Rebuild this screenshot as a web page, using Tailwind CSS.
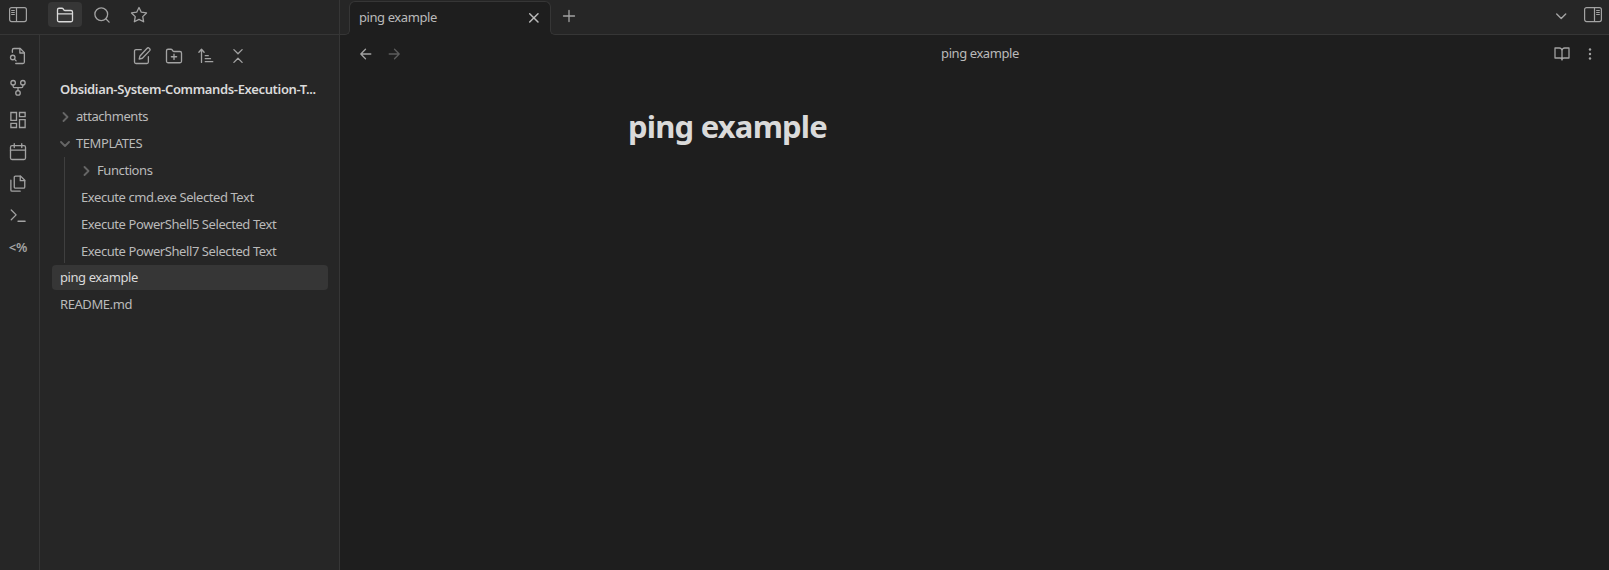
<!DOCTYPE html>
<html lang="en">
<head>
<meta charset="utf-8">
<title>ping example</title>
<script src="https://cdn.jsdelivr.net/npm/@tailwindcss/browser@4"></script>
</head>
<body class="flex h-[570px] w-[1609px] overflow-hidden bg-[#1e1e1e] font-['Noto_Sans','Open_Sans',sans-serif] text-[13px] leading-[17px] tracking-[-0.42px] text-[#bababa]">
<div class="flex w-[340px] shrink-0 flex-col border-r border-[#363636] bg-[#262626]">
  <header class="flex h-[35px] shrink-0 items-start border-b border-[#363636] text-[#a3a3a3]">
    <div class="flex h-[30px] w-12 items-center pl-[9px]">
      <svg class="h-[18px] w-[18px]" viewBox="0 0 18 18" fill="none" stroke="currentColor"><rect x=".6" y="1.6" width="16.8" height="14" rx="2" stroke-width="1.2"/><path d="M7.5 1.6v14" stroke-width="1.2"/><path d="M2.2 4.5h3.6M2.2 6.5h3.6M2.2 8.5h3.6"/></svg>
    </div>
    <div class="mt-[2px] flex h-[25px] w-[34px] items-center justify-center rounded-[4px] bg-[#363636] text-[#dadada]">
      <svg class="h-[18px] w-[18px]" viewBox="0 0 24 24" fill="none" stroke="currentColor" stroke-width="1.75" stroke-linecap="round" stroke-linejoin="round"><path d="M4 21h16a2 2 0 0 0 2-2V8a2 2 0 0 0-2-2h-7.93a2 2 0 0 1-1.66-.9l-.82-1.2A2 2 0 0 0 7.930 3H4a2 2 0 0 0-2 2v14c0 1.100.9 2 2 2ZM2 10.500h20"/></svg>
    </div>
    <div class="mt-[2px] ml-[3px] flex h-[25px] w-[34px] items-center justify-center">
      <svg class="h-[18px] w-[18px]" viewBox="0 0 24 24" fill="none" stroke="currentColor" stroke-width="1.75" stroke-linecap="round" stroke-linejoin="round"><circle cx="11" cy="11" r="8.500"/><path d="m21.500 21.500-4.400-4.400"/></svg>
    </div>
    <div class="mt-[2px] ml-[3px] flex h-[25px] w-[34px] items-center justify-center">
      <svg class="h-[18px] w-[18px]" viewBox="0 0 24 24" fill="none" stroke="currentColor" stroke-width="1.75" stroke-linecap="round" stroke-linejoin="round"><path d="m12 2 3.090 6.260L22 9.270l-5 4.870 1.180 6.880L12 17.770l-6.180 3.250L7 14.140 2 9.270l6.910-1.010L12 2z"/></svg>
    </div>
  </header>
  <div class="flex min-h-0 flex-1">
    <nav class="flex w-10 shrink-0 flex-col items-center gap-[14px] border-r border-[#363636] pt-3 pr-[3px] text-[#a3a3a3]">
      <svg class="h-[18px] w-[18px] shrink-0" viewBox="0 0 24 24" fill="none" stroke="currentColor" stroke-width="1.75" stroke-linecap="round" stroke-linejoin="round"><path d="M4.500 7V4a2 2 0 0 1 2-2h8.500l5.500 5.500V20a2 2 0 0 1-2 2H9"/><path d="M14.500 2v6h6"/><circle cx="5" cy="14" r="3"/><path d="m9.500 18.500-2.300-2.300"/></svg>
      <svg class="h-[18px] w-[18px] shrink-0" viewBox="0 0 24 24" fill="none" stroke="currentColor" stroke-width="1.75" stroke-linecap="round" stroke-linejoin="round"><circle cx="12" cy="18.500" r="3"/><circle cx="5.500" cy="5" r="3"/><circle cx="18.500" cy="5" r="3"/><path d="M18.500 8v1.500a2 2 0 0 1-2 2h-9a2 2 0 0 1-2-2V8M12 11.500v4"/></svg>
      <svg class="h-[18px] w-[18px] shrink-0" viewBox="0 0 24 24" fill="none" stroke="currentColor" stroke-width="1.75"><path d="M2.500 2h7.500v10.500H2.500zM14 2h7.500v5.500H14zM14 11.500h7.500V22H14zM2.500 16.500h7.500V22H2.500z"/></svg>
      <svg class="h-[18px] w-[18px] shrink-0" viewBox="0 0 24 24" fill="none" stroke="currentColor" stroke-width="1.75" stroke-linecap="round" stroke-linejoin="round"><rect x="2" y="3.500" width="20" height="18.500" rx="2"/><path d="M7 1v5M17 1v5M2 9.500h20"/></svg>
      <svg class="h-[18px] w-[18px] shrink-0" viewBox="0 0 24 24" fill="none" stroke="currentColor" stroke-width="1.750" stroke-linecap="round" stroke-linejoin="round"><path d="M15.500 1.500H8.600a1.600 1.600 0 0 0-1.600 1.600v12.800A1.600 1.600 0 0 0 8.600 17.500h10.800a1.600 1.600 0 0 0 1.600-1.600V7L15.500 1.500z"/><path d="M15 1.500v6h6M2.500 7v12.900A1.600 1.600 0 0 0 4.100 21.500h10.800"/></svg>
      <svg class="h-[18px] w-[18px] shrink-0" viewBox="0 0 24 24" fill="none" stroke="currentColor" stroke-width="1.75" stroke-linecap="round" stroke-linejoin="round"><path d="m3 17 6.500-6.500L3 4M12 19h9.500"/></svg>
      <span class="-mt-px flex h-[18px] items-center text-[13px] font-semibold tracking-[-0.2px]">&lt;%</span>
    </nav>
    <main class="min-w-0 flex-1 pt-3">
      <div class="flex h-[18px] gap-[14px] pl-[93px] text-[#a3a3a3]">
        <svg class="h-[18px] w-[18px]" viewBox="0 0 24 24" fill="none" stroke="currentColor" stroke-width="1.75" stroke-linecap="round" stroke-linejoin="round"><path d="M11 3.500H4a2 2 0 0 0-2 2v14.500a2 2 0 0 0 2 2h14.500a2 2 0 0 0 2-2V13"/><path d="M18.500 2a2.300 2.300 0 0 1 3.500 3.200L12.500 15l-4.300 1.200L9.300 12z"/></svg>
        <svg class="h-[18px] w-[18px]" viewBox="0 0 24 24" fill="none" stroke="currentColor" stroke-width="1.75" stroke-linecap="round" stroke-linejoin="round"><path d="M4 21h16a2 2 0 0 0 2-2V8a2 2 0 0 0-2-2h-7.930a2 2 0 0 1-1.660-.9l-.82-1.200A2 2 0 0 0 7.930 3H4a2 2 0 0 0-2 2v14a2 2 0 0 0 2 2ZM12 9.500v7M8.500 13h7"/></svg>
        <svg class="h-[18px] w-[18px]" viewBox="0 0 24 24" fill="none" stroke="currentColor" stroke-width="1.75" stroke-linecap="round" stroke-linejoin="round"><path d="M11 11.500h4M11 15.500h7M11 19.500h10M2.500 7l3.500-4 3.500 4M6 4v16.500"/></svg>
        <svg class="h-[18px] w-[18px]" viewBox="0 0 24 24" fill="none" stroke="currentColor" stroke-width="1.75" stroke-linecap="round" stroke-linejoin="round"><path d="m6.500 20.500 5.500-5.500 5.500 5.500M6.500 3.500 12 9l5.500-5.500"/></svg>
      </div>
      <div class="mt-[11px] pl-3">
        <div class="flex h-[27px] items-center pl-2 font-semibold tracking-[-0.35px] whitespace-nowrap text-[#dadada]">Obsidian-System-Commands-Execution-T...</div>
        <div class="flex h-[27px] items-center gap-[6px] pl-2"><svg class="h-[10px] w-[10px] text-[#666]" viewBox="0 0 10 10" fill="none" stroke="currentColor" stroke-width="1.800" stroke-linecap="round" stroke-linejoin="round"><path d="m3.500 1 4 4-4 4"/></svg>attachments</div>
        <div class="flex h-[27px] items-center gap-[6px] pl-2"><svg class="h-[10px] w-[10px] text-[#666]" viewBox="0 0 10 10" fill="none" stroke="currentColor" stroke-width="1.800" stroke-linecap="round" stroke-linejoin="round"><path d="m1 3 4 4 4-4"/></svg>TEMPLATES</div>
        <div class="ml-3 border-l border-[#3f3f3f]">
          <div class="flex h-[27px] items-center gap-[6px] pl-4"><svg class="h-[10px] w-[10px] text-[#666]" viewBox="0 0 10 10" fill="none" stroke="currentColor" stroke-width="1.800" stroke-linecap="round" stroke-linejoin="round"><path d="m3.500 1 4 4-4 4"/></svg>Functions</div>
          <div class="flex h-[27px] items-center pl-4">Execute cmd.exe Selected Text</div>
          <div class="flex h-[27px] items-center pl-4">Execute PowerShell5 Selected Text</div>
          <div class="flex h-[25px] items-center pt-[2px] pl-4">Execute PowerShell7 Selected Text</div>
        </div>
        <div class="mt-[2px] flex h-[25px] w-[276px] items-center rounded-[4px] bg-[#363636] pb-px pl-2 text-[#dadada]">ping example</div>
        <div class="flex h-[27px] items-center pl-2 pt-px">README.md</div>
      </div>
    </main>
  </div>
</div>
<div class="flex min-w-0 flex-1 flex-col">
  <header class="flex h-[35px] shrink-0 bg-[#262626] text-[#a3a3a3]">
    <div class="w-[9px] border-b border-[#363636]"></div>
    <div class="relative mt-px flex h-[34px] w-[202px] items-center rounded-t-[6px] border-x border-t border-[#363636] bg-[#1e1e1e] pr-[10px] pb-[2px] pl-[9px] text-[#bababa]">
      <span class="flex-1">ping example</span>
      <svg class="h-3 w-3" viewBox="0 0 12 12" fill="none" stroke="currentColor" stroke-width="1.500" stroke-linecap="round"><path d="m1.700 1.700 8.300 8.300M10 1.700 1.700 10"/></svg>
      <div class="absolute bottom-0 -left-[5px] h-[5px] w-[5px] bg-[#1e1e1e]"><div class="h-full w-full rounded-br-[5px] border-r border-b border-[#363636] bg-[#262626]"></div></div>
      <div class="absolute -right-[5px] bottom-0 h-[5px] w-[5px] bg-[#1e1e1e]"><div class="h-full w-full rounded-bl-[5px] border-b border-l border-[#363636] bg-[#262626]"></div></div>
    </div>
    <div class="flex flex-1 border-b border-[#363636]">
      <svg class="mt-[9px] ml-[11px] h-[14px] w-[14px]" viewBox="0 0 14 14" fill="none" stroke="currentColor" stroke-width="1.300" stroke-linecap="round"><path d="M7 1.500v11M1.500 7h11"/></svg>
      <div class="flex-1"></div>
      <svg class="mt-[9px] mr-[16px] h-[14px] w-[14px]" viewBox="0 0 14 14" fill="none" stroke="currentColor" stroke-width="1.400" stroke-linecap="round" stroke-linejoin="round"><path d="m2.700 5 4.500 4.500L11.700 5"/></svg>
      <svg class="mt-[6px] mr-[7px] h-[18px] w-[18px]" viewBox="0 0 18 18" fill="none" stroke="currentColor"><rect x=".6" y="1.600" width="16.800" height="14" rx="2" stroke-width="1.200"/><path d="M10.500 1.600v14" stroke-width="1.200"/><path d="M12.200 4.500h3.600M12.200 6.500h3.600M12.200 8.500h3.600"/></svg>
    </div>
  </header>
  <div class="flex h-[38px] shrink-0 items-center pl-[19px] text-[#a3a3a3]">
    <svg class="h-[14px] w-[14px]" viewBox="0 0 14 14" fill="none" stroke="currentColor" stroke-width="1.300" stroke-linecap="round" stroke-linejoin="round"><path d="M6.500 2.200 1.800 7l4.700 4.800M1.800 7h10"/></svg>
    <svg class="ml-[14px] h-[14px] w-[14px] text-[#5c5c5c]" viewBox="0 0 14 14" fill="none" stroke="currentColor" stroke-width="1.300" stroke-linecap="round" stroke-linejoin="round"><path d="m7.500 2.200 4.700 4.800-4.700 4.800M12.200 7h-10"/></svg>
    <div class="flex-1 pr-[2px] pb-[2px] pl-[7px] text-center text-[#bababa]">ping example</div>
    <svg class="mr-[11px] h-4 w-4" viewBox="0 0 24 24" fill="none" stroke="currentColor" stroke-width="1.900" stroke-linecap="round" stroke-linejoin="round"><path d="M1.500 3h6.500a4 4 0 0 1 4 4v14a3 3 0 0 0-3-3H1.500zM22.500 3H16a4 4 0 0 0-4 4v14a3 3 0 0 1 3-3h7.500z"/></svg>
    <svg class="mr-[10px] h-[18px] w-[18px]" viewBox="0 0 18 18" fill="currentColor"><circle cx="9" cy="4.500" r="1.200"/><circle cx="9" cy="9" r="1.200"/><circle cx="9" cy="13.500" r="1.200"/></svg>
  </div>
  <h1 class="mt-[33px] ml-[288px] text-[31px] leading-[40px] font-bold tracking-[-0.8px] text-[#dadada]">ping example</h1>
</div>
</body>
</html>
